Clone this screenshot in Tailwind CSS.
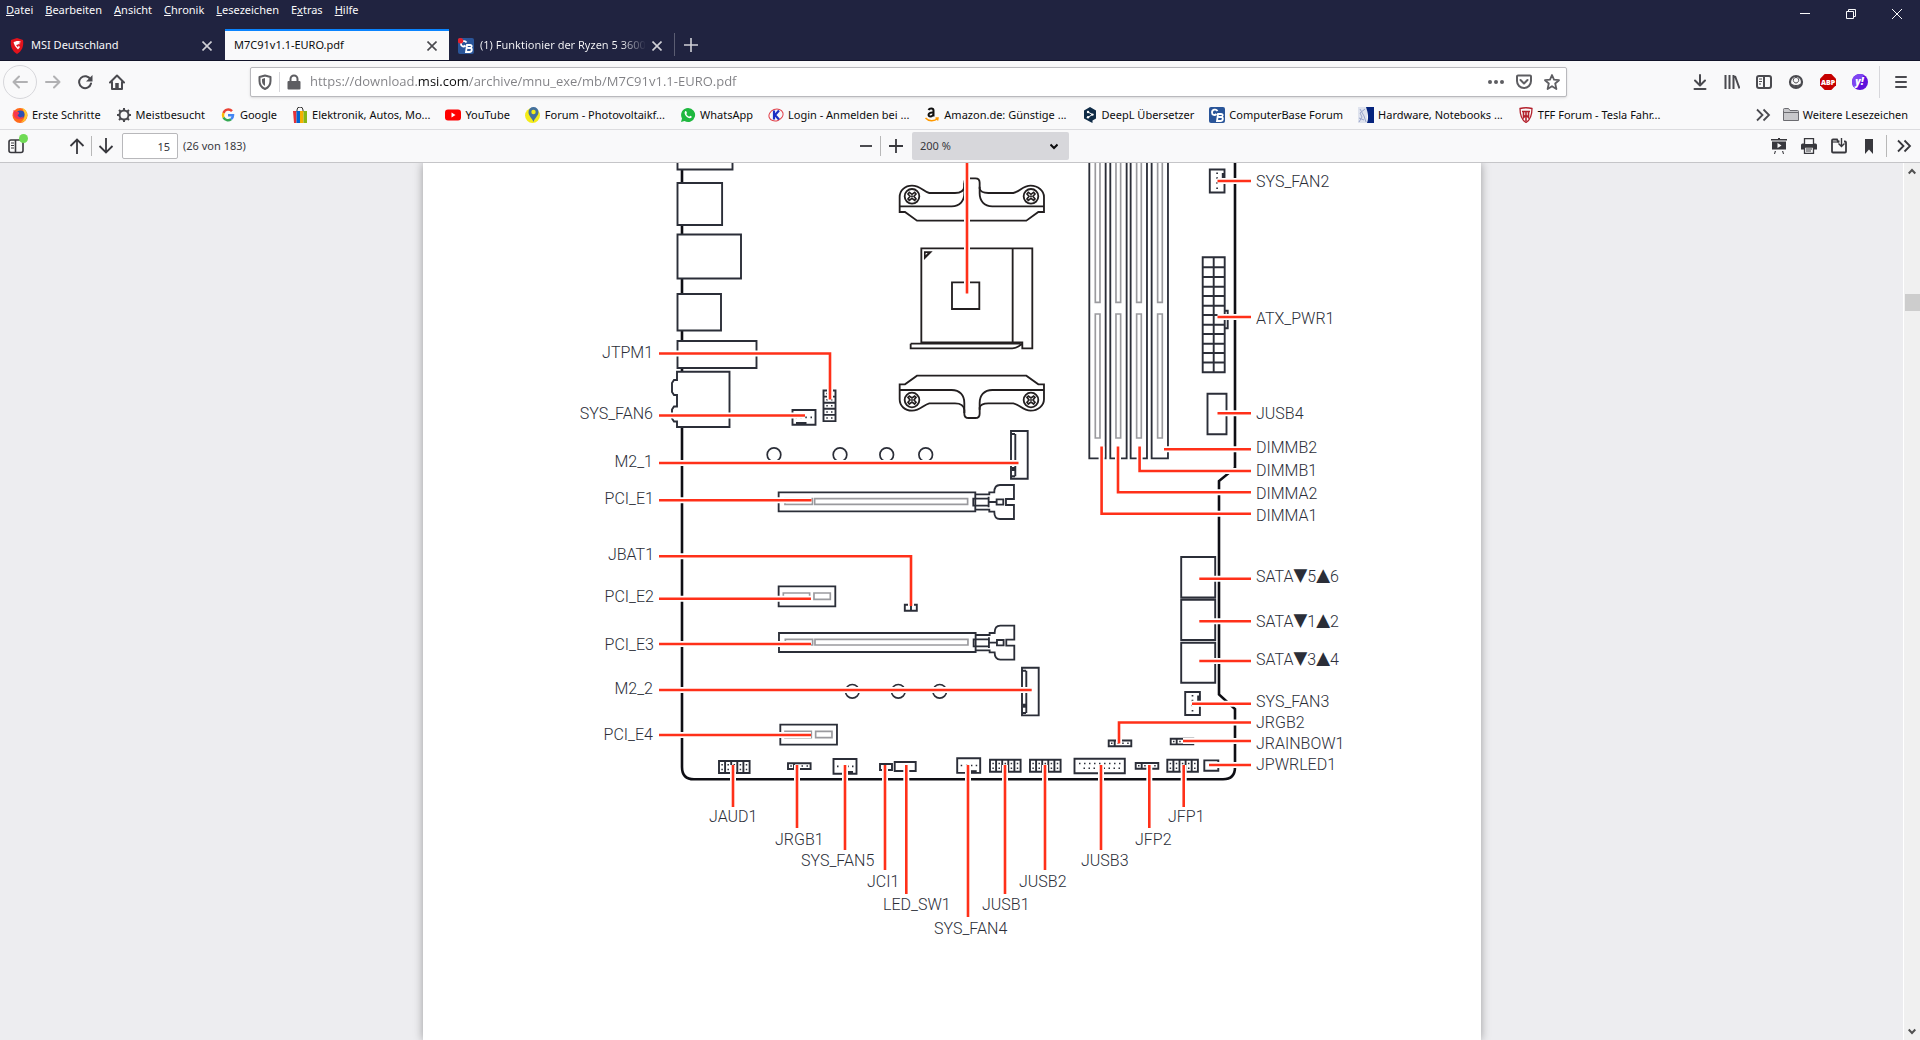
<!DOCTYPE html>
<html lang="de">

<head>
    <meta charset="UTF-8">
    <meta name="viewport" content="width=device-width, initial-scale=1.0">
    <script src="https://cdn.jsdelivr.net/npm/@tailwindcss/browser@4"></script>
    <title>M7C91v1.1-EURO.pdf</title>
</head>

<body class="flex h-screen flex-col overflow-hidden bg-[#f9f9fa] font-['Noto_Sans',sans-serif] text-[11px] text-[#0c0c0d]">

    <!-- Titelleiste -->
    <header class="border-b border-[#12142a] bg-[#202340] text-[#f9f9fa]">
        <div class="flex h-[29px] items-start justify-between">
            <nav class="flex gap-3 px-1.5 pt-0.5" aria-label="Menü">
                <button><u>D</u>atei</button>
                <button><u>B</u>earbeiten</button>
                <button><u>A</u>nsicht</button>
                <button><u>C</u>hronik</button>
                <button><u>L</u>esezeichen</button>
                <button>E<u>x</u>tras</button>
                <button><u>H</u>ilfe</button>
            </nav>
            <div class="flex">
                <button class="flex h-7 w-[46px] items-center justify-center" aria-label="Minimieren">
                    <svg class="size-[10px]" viewBox="0 0 10 10" stroke="currentColor"><path d="M0 4.5h10" /></svg>
                </button>
                <button class="flex h-7 w-[46px] items-center justify-center" aria-label="Verkleinern">
                    <svg class="size-[10px]" viewBox="0 0 10 10" fill="none" stroke="currentColor"><path d="M.5 2.5h7v7h-7zM2.5 2.5v-2h7v7h-2" /></svg>
                </button>
                <button class="flex h-7 w-[46px] items-center justify-center" aria-label="Schließen">
                    <svg class="size-[10px]" viewBox="0 0 10 10" stroke="currentColor"><path d="M0 0l10 10M10 0L0 10" /></svg>
                </button>
            </div>
        </div>
        <div class="flex h-[31px]">
            <div class="flex w-[225px] items-center gap-1.5 border-t-2 border-transparent pr-[13px] pl-[9px]">
                <svg class="h-4 w-4 shrink-0" viewBox="0 0 16 16"><path d="M8 0l6 2c1 6-1 11-6 14C3 13 1 8 2 2z" fill="#e2131c" /><path d="M4.500 4.500c2-2 6-2 7.500-.5L9.500 5l2 1-3 .5 2.500 2.500-2 2.500-3-3.500z" fill="#fff" /><path d="M7 7l3-.5-1 3z" fill="#e2131c" /></svg>
                <span class="flex-1 truncate">MSI Deutschland</span>
                <button aria-label="Tab schließen"><svg class="size-[10px]" viewBox="0 0 10 10" stroke="#d0d0d6" stroke-width="1.6"><path d="M.5.5l9 9M9.5.5l-9 9" /></svg></button>
            </div>
            <div class="flex w-[224px] items-center gap-1.5 border-t-2 border-[#0a84ff] bg-[#f9f9fa] pr-3 pl-[9px] text-[#0c0c0d]">
                <span class="flex-1 truncate">M7C91v1.1-EURO.pdf</span>
                <button aria-label="Tab schließen"><svg class="size-[10px]" viewBox="0 0 10 10" stroke="#4a4a4f" stroke-width="1.6"><path d="M.5.5l9 9M9.5.5l-9 9" /></svg></button>
            </div>
            <div class="flex w-[225px] items-center gap-1.5 border-t-2 border-transparent pr-3 pl-[9px]">
                <svg class="h-4 w-4 shrink-0" viewBox="0 0 16 16"><rect width="16" height="16" rx="2" fill="#2a5599" /><path d="M8.500 4.500C7 2 3 3 3 6s3 3 4.500 1.500M9 7h3c2.500 0 2 3 0 3H9.500 12c3 0 2 4-.5 4H8z" fill="none" stroke="#fff" stroke-width="1.800" /><circle cx="2.500" cy="2.800" r="2.800" fill="#e8202a" /></svg>
                <span class="flex-1 overflow-hidden bg-linear-to-r from-[#f9f9fa] from-85% to-transparent bg-clip-text whitespace-nowrap text-transparent">(1) Funktionier der Ryzen 5 3600</span>
                <button aria-label="Tab schließen"><svg class="size-[10px]" viewBox="0 0 10 10" stroke="#d0d0d6" stroke-width="1.6"><path d="M.5.5l9 9M9.5.5l-9 9" /></svg></button>
            </div>
            <div class="my-1 w-px bg-[#5b5d72]"></div>
            <button class="flex w-8 items-center justify-center" aria-label="Neuer Tab">
                <svg class="size-[14px]" viewBox="0 0 14 14" stroke="#d0d0d6" stroke-width="1.6"><path d="M7 0v14M0 7h14" /></svg>
            </button>
        </div>
    </header>

    <!-- Navigation -->
    <div class="flex h-[41px] shrink-0 items-center px-[3px] text-[#4a4a4f]">
        <button class="flex size-[34px] items-center justify-center rounded-full border border-[#d7d7db] text-[#b1b1b3]" aria-label="Zurück">
            <svg class="size-4" viewBox="0 0 16 16" fill="none" stroke="currentColor" stroke-width="2" stroke-linecap="round" stroke-linejoin="round"><path d="M15 8H1.500M7 2.500L1.500 8 7 13.500" /></svg>
        </button>
        <button class="flex size-8 items-center justify-center text-[#b1b1b3]" aria-label="Vor">
            <svg class="size-4" viewBox="0 0 16 16" fill="none" stroke="currentColor" stroke-width="2" stroke-linecap="round" stroke-linejoin="round"><path d="M1 8h13.500M9 2.500L14.500 8 9 13.500" /></svg>
        </button>
        <button class="flex size-8 items-center justify-center" aria-label="Neu laden">
            <svg class="size-4" viewBox="0 0 16 16" fill="none" stroke="currentColor" stroke-width="2"><path d="M13.500 5.500A6 6 0 1 0 14 9.500" stroke-linecap="round" /><path d="M15.500 1v6.500H9z" fill="currentColor" stroke="none" /></svg>
        </button>
        <button class="flex size-8 items-center justify-center" aria-label="Startseite">
            <svg class="size-4" viewBox="0 0 16 16" fill="none" stroke="currentColor" stroke-width="2" stroke-linecap="round" stroke-linejoin="round"><path d="M1 8.500L8 1.500l7 7M3 8v7h10V8" /><path d="M8 9v5.500" stroke-width="3.500" stroke-linecap="butt" /></svg>
        </button>
        <div class="w-[117px]"></div>
        <div class="flex h-[30px] flex-1 items-center rounded-xs border border-[#b9b9bd] bg-white shadow-sm">
            <svg class="ml-[6px] size-4 shrink-0" viewBox="0 0 16 16" fill="none" stroke="#5e5e62" stroke-width="2"><path d="M8 1.500L2.500 3v4c0 4 2 6.500 5.500 8 3.500-1.500 5.500-4 5.500-8V3z" stroke-linejoin="round" /><path d="M8 4v8c-2-1-3-3-3-5V5z" fill="#5e5e62" stroke="none" /></svg>
            <div class="mx-[6px] h-5 w-px bg-[#d7d7db]"></div>
            <svg class="size-4 shrink-0" viewBox="0 0 16 16"><path d="M2.500 7h11a1 1 0 0 1 1 1v6.500a1 1 0 0 1-1 1h-11a1 1 0 0 1-1-1V8a1 1 0 0 1 1-1z" fill="#5e5e62" /><path d="M4.500 8V5a3.500 3.500 0 0 1 7 0v3" fill="none" stroke="#5e5e62" stroke-width="2" /></svg>
            <input class="mx-2 w-full flex-1 bg-[linear-gradient(to_right,#808084_107px,#0c0c0d_107px,#0c0c0d_158px,#808084_158px)] bg-clip-text font-['Open_Sans',sans-serif] text-[13px] text-transparent outline-none" type="text" aria-label="Adresse" value="https://download.msi.com/archive/mnu_exe/mb/M7C91v1.1-EURO.pdf">
            <button class="flex w-7 shrink-0 justify-center" aria-label="Seitenaktionen"><svg class="size-4" viewBox="0 0 16 16" fill="#5e5e62"><circle cx="2" cy="8" r="2" /><circle cx="8" cy="8" r="2" /><circle cx="14" cy="8" r="2" /></svg></button>
            <button class="flex w-7 shrink-0 justify-center" aria-label="Pocket"><svg class="size-4" viewBox="0 0 16 16" fill="none" stroke="#5e5e62" stroke-width="2" stroke-linecap="round" stroke-linejoin="round"><path d="M2 1.500h12a1 1 0 0 1 1 1V7A7 7 0 0 1 1 7V2.500a1 1 0 0 1 1-1z" /><path d="M4.500 6L8 9.500 11.500 6" /></svg></button>
            <button class="flex w-7 shrink-0 justify-center" aria-label="Lesezeichen hinzufügen"><svg class="size-4" viewBox="0 0 16 16" fill="none" stroke="#5e5e62" stroke-width="1.800" stroke-linejoin="round"><path d="M8 1l2 4.700 5 .5-3.800 3.300L12.400 15 8 12.200 3.600 15l1.200-5.500L1 6.200l5-.5z" /></svg></button>
        </div>
        <div class="w-[117px]"></div>
        <button class="flex size-8 items-center justify-center" aria-label="Downloads"><svg class="size-4" viewBox="0 0 16 16" fill="none" stroke="currentColor" stroke-width="2" stroke-linecap="round" stroke-linejoin="round"><path d="M8 1v10M3 6.500L8 11.500 13 6.500M2.500 15h11" /></svg></button>
        <button class="flex size-8 items-center justify-center" aria-label="Bibliothek"><svg class="size-4" viewBox="0 0 16 16" fill="none" stroke="currentColor" stroke-width="2"><path d="M1.500 1v14M5.500 1v14M9.500 1v14M11 2l4.500 12.500" /></svg></button>
        <button class="flex size-8 items-center justify-center" aria-label="Sidebars"><svg class="size-4" viewBox="0 0 16 16" fill="none" stroke="currentColor" stroke-width="2"><rect x="1" y="2" width="14" height="12" rx="2" /><path d="M8 2v12" /><path d="M3 5h3M3 7.500h3M3 10h2" stroke-width="1" /></svg></button>
        <button class="flex size-8 items-center justify-center" aria-label="Konto"><svg class="size-4" viewBox="0 0 16 16" fill="none" stroke="currentColor"><circle cx="8" cy="8" r="6" stroke-width="2.200" /><path d="M5.500 5a2.800 2.800 0 0 1 5 0c.8 2-.8 4-2.500 4S4.700 7 5.500 5z" stroke-width="1" /><path d="M3.500 10c2 2 7 2 9 0-1 3.500-8 3.500-9 0z" fill="currentColor" /></svg></button>
        <button class="flex size-8 items-center justify-center" aria-label="Adblock Plus"><svg class="size-4" viewBox="0 0 16 16"><path d="M4.700 0h6.600L16 4.700v6.600L11.300 16H4.700L0 11.300V4.700z" fill="#c60000" /><text x="8" y="10.700" text-anchor="middle" fill="#fff" class="font-['Open_Sans',sans-serif] text-[7px] font-extrabold">ABP</text></svg></button>
        <button class="flex size-8 items-center justify-center" aria-label="Yahoo"><svg class="size-4" viewBox="0 0 16 16"><circle cx="8" cy="8" r="8" fill="#5f10dc" /><path d="M0 8a8 8 0 0 1 12-7L2.500 14A8 8 0 0 1 0 8z" fill="#7e45f2" /><text x="7.500" y="11" text-anchor="middle" fill="#fff" class="font-['Open_Sans',sans-serif] text-[10px] font-extrabold italic">y!</text></svg></button>
        <div class="mr-[5px] ml-[3px] h-8 w-px bg-[#d7d7db]"></div>
        <button class="flex size-8 items-center justify-center" aria-label="Menü öffnen"><svg class="size-4" viewBox="0 0 16 16" stroke="currentColor" stroke-width="2" stroke-linecap="round"><path d="M3 3h10M3 8h10M3 13h10" /></svg></button>
    </div>

    <!-- Lesezeichenleiste -->
    <div class="flex h-7 shrink-0 items-center justify-between border-b border-[#dcdcdf] px-3 pb-px">
        <div class="flex gap-[15px] whitespace-nowrap">
            <a href="#" class="flex items-center gap-1"><svg class="size-4" viewBox="0 0 16 16"><circle cx="8" cy="8.500" r="7.500" fill="#ff6a1a" /><path d="M10 1c4 1 6 5 5 9-1 3-3 5-6 5 4-2 5-8 1-14z" fill="#ffc72e" /><circle cx="8.500" cy="7.500" r="4" fill="#2b4fb5" /><path d="M1.500 3c1 1 3 2 5 2 1 1 1 2-1 3 1 3 4 3 6 1-1 4-8 5-10-1z" fill="#f7374f" /></svg>Erste Schritte</a>
            <a href="#" class="flex items-center gap-1"><svg class="size-4" viewBox="0 0 16 16" fill="none" stroke="#4a4a4f"><circle cx="8" cy="8" r="4.500" stroke-width="2" /><path d="M8 1v2.500M8 12.500V15M1 8h2.500M12.500 8H15M3 3l1.800 1.800M11.200 11.200L13 13M3 13l1.800-1.800M11.200 4.800L13 3" stroke-width="2" /></svg>Meistbesucht</a>
            <a href="#" class="flex items-center gap-1"><svg class="size-4" viewBox="0 0 16 16" fill="none" stroke-width="2.500"><path d="M12 4.200A5 5 0 0 0 3.500 6" stroke="#ea4335" /><path d="M3.500 6a5 5 0 0 0 0 4.500" stroke="#fbbc05" /><path d="M3.500 10.500A5 5 0 0 0 11 12.200" stroke="#34a853" /><path d="M11 12.200A5 5 0 0 0 13 8.200H8" stroke="#4285f4" /></svg>Google</a>
            <a href="#" class="flex items-center gap-1"><svg class="size-4" viewBox="0 0 16 16"><path d="M5 5V3a3 3 0 0 1 6 0v2" fill="none" stroke="#333" /><path d="M1 4h3.500v12H2z" fill="#e53238" /><path d="M4.500 4H8v12H4.500z" fill="#0064d2" /><path d="M8 4h3.500v12H8z" fill="#f5af02" /><path d="M11.500 4H15v12h-3.500z" fill="#86b817" /></svg>Elektronik, Autos, Mo...</a>
            <a href="#" class="flex items-center gap-1"><svg class="size-4" viewBox="0 0 16 16"><rect x="0" y="2.500" width="16" height="11" rx="3" fill="#f00" /><path d="M6.500 5.500v5l4-2.500z" fill="#fff" /></svg>YouTube</a>
            <a href="#" class="flex items-center gap-1"><svg class="size-4" viewBox="0 0 16 16"><circle cx="7.500" cy="8.500" r="7.500" fill="#f4ec1a" /><path d="M8.500 15C7 11 3.500 9 3.500 5a5 5 0 0 1 10 0c0 4-4 6-5 10z" fill="#44709d" /><circle cx="8.500" cy="5" r="2.200" fill="#f4ec1a" /></svg>Forum - Photovoltaikf...</a>
            <a href="#" class="flex items-center gap-1"><svg class="size-4" viewBox="0 0 16 16"><path d="M8 1a7 7 0 1 1-3.500 13L1 15l1-3.500A7 7 0 0 1 8 1z" fill="#1fb83f" /><path d="M5 4.500c1-1 1.500 0 2 1.500L6.300 7C7 8.500 8 9 9.200 9.700l1-1c1.500.5 2 1 1.300 1.800C9 13 3 7.500 5 4.500z" fill="#fff" /></svg>WhatsApp</a>
            <a href="#" class="flex items-center gap-1"><svg class="size-4" viewBox="0 0 16 16" fill="none"><ellipse cx="8" cy="8" rx="7.200" ry="5.800" stroke="#e2404a" transform="rotate(-20 8 8)" /><path d="M6 3.500v9M11 3.500L7 8l4 4.500" stroke="#1c2fc4" stroke-width="2.200" /></svg>Login - Anmelden bei ...</a>
            <a href="#" class="flex items-center gap-1"><svg class="size-4" viewBox="0 0 16 16" fill="none"><path d="M4.500 3c1-2 5-2 5 .5v6M9.500 5.500c-6-.5-6 4-3 4 1.500 0 3-1.500 3-3" stroke="#111" stroke-width="2" /><path d="M1.500 11c3 3.500 9 3.500 12 .5M11.500 11l2.500 0-.5 2.500" stroke="#f90" stroke-width="1.500" /></svg>Amazon.de: Günstige ...</a>
            <a href="#" class="flex items-center gap-1"><svg class="size-4" viewBox="0 0 16 16"><path d="M8 0l6 3.500v8L10.500 13.500V16L8 14.700 2 11.500v-8z" fill="#0f2b46" /><path d="M6 5l4.500 2.500L6 10.300" fill="none" stroke="#fff" /><circle cx="6" cy="5" r="1.200" fill="#fff" /><circle cx="10.500" cy="7.600" r="1.200" fill="#fff" /><circle cx="6" cy="10.300" r="1.200" fill="#fff" /></svg>DeepL Übersetzer</a>
            <a href="#" class="flex items-center gap-1"><svg class="size-4" viewBox="0 0 16 16"><rect width="16" height="16" rx="2" fill="#2a5599" /><path d="M8.500 4C7 1.500 3 2.500 3 5.500s3 3 4.500 1.500M9 7h3c2.500 0 2 3 0 3H9.500 12c3 0 2 4-.5 4H8z" fill="none" stroke="#fff" stroke-width="1.800" /></svg>ComputerBase Forum</a>
            <a href="#" class="flex items-center gap-1"><svg class="size-4" viewBox="0 0 16 16"><path d="M0 0h9v16H0z" fill="#dfe3ee" /><path d="M1 15l3-5-2-4 5-4M2 2l4 7 2 6M1 11l5 2" fill="none" stroke="#9aa6cc" /><path d="M8 0h8v16H9c2-5 1-10-1-16z" fill="#06247d" /></svg>Hardware, Notebooks ...</a>
            <a href="#" class="flex items-center gap-1"><svg class="size-4" viewBox="0 0 16 16" fill="none" stroke="#b3202c"><path d="M2 1.500q6-1.500 12 0C14 8 13 12.500 8 15.500 3 12.500 2 8 2 1.500z" stroke-width="1.300" /><path d="M4 4.500h8M8 4.500v10M5.500 4.500v6l2-2M10.500 4.500v6l-2-2" stroke-width="1.600" /></svg>TFF Forum - Tesla Fahr...</a>
        </div>
        <div class="flex items-center whitespace-nowrap">
            <button class="mr-3" aria-label="Weitere Einträge"><svg class="size-4" viewBox="0 0 16 16" fill="none" stroke="#4a4a4f" stroke-width="1.800"><path d="M2 2.500L7.500 8 2 13.500M8.500 2.500L14 8l-5.500 5.500" /></svg></button>
            <a href="#" class="flex items-center gap-1"><svg class="size-4" viewBox="0 0 16 16"><path d="M.5 3.500v-1q0-1 1-1h4l1.500 2h7.500q1 0 1 1v9h-15z" fill="#c8c8cb" stroke="#6b6b70" /><path d="M.5 5.500h15" stroke="#6b6b70" /></svg>Weitere Lesezeichen</a>
        </div>
    </div>

    <!-- PDF-Werkzeugleiste -->
    <div class="flex h-[33px] shrink-0 items-center border-b border-[#c5c5c8] text-[#38383d]">
        <div class="flex flex-1 items-center">
            <button class="relative ml-2" aria-label="Sidebar umschalten">
                <svg class="size-4" viewBox="0 0 16 16" fill="none" stroke="currentColor" stroke-width="1.600"><rect x="1" y="2" width="14" height="12.500" rx="2" /><path d="M7.500 2v12.500" /><path d="M3 5h3M3 7.500h3M3 10h3" stroke-width="1" /></svg>
                <span class="absolute -top-1 -right-1 size-[9px] rounded-full bg-[#70db55]"></span>
            </button>
            <button class="ml-[45px]" aria-label="Vorherige Seite"><svg class="size-4" viewBox="0 0 16 16" fill="none" stroke="currentColor" stroke-width="1.800"><path d="M8 16V1.500M1.500 8L8 1.500 14.500 8" /></svg></button>
            <div class="mx-[6px] h-5 w-px bg-[#b8b8b8]"></div>
            <button aria-label="Nächste Seite"><svg class="size-4" viewBox="0 0 16 16" fill="none" stroke="currentColor" stroke-width="1.800"><path d="M8 0v14.500M1.500 8L8 14.500 14.500 8" /></svg></button>
            <input id="seite" class="ml-2 h-[26px] w-14 rounded-xs border border-[#b8b8bb] bg-white px-[7px] text-right" type="text" value="15">
            <label for="seite" class="ml-[5px]">(26 von 183)</label>
        </div>
        <div class="flex items-center">
            <button class="flex w-[29px] justify-center" aria-label="Verkleinern"><svg class="size-4" viewBox="0 0 16 16" stroke="currentColor" stroke-width="1.800"><path d="M2 8h12" /></svg></button>
            <div class="h-5 w-px bg-[#b8b8b8]"></div>
            <button class="flex w-[29px] justify-center" aria-label="Vergrößern"><svg class="size-4" viewBox="0 0 16 16" stroke="currentColor" stroke-width="1.800"><path d="M1 8h14M8 1v14" /></svg></button>
            <div class="relative ml-0.5 h-7 w-[157px]">
                <select class="size-full appearance-none rounded-xs bg-[#d7d7db] px-2" aria-label="Zoom">
                    <option>200 %</option>
                    <option>150 %</option>
                    <option>100 %</option>
                </select>
                <svg class="pointer-events-none absolute top-2.5 right-[11px] size-2" viewBox="0 0 8 8" fill="none" stroke="#0c0c0d" stroke-width="2"><path d="M.5 2.500L4 6l3.500-3.500" /></svg>
            </div>
        </div>
        <div class="flex flex-1 items-center justify-end">
            <button class="flex w-[30px] justify-center" aria-label="Präsentationsmodus"><svg class="size-4" viewBox="0 0 16 16"><path d="M7 0h2v1h7v1.500H0V1h7zM1 3.500h14v8H1zM5 13l-1 3H3l.8-3zM11 13l1 3h1l-.8-3z" fill="currentColor" /><path d="M6.500 5v5l4-2.500z" fill="#f9f9fa" /></svg></button>
            <button class="flex w-[30px] justify-center" aria-label="Drucken"><svg class="size-4" viewBox="0 0 16 16"><path d="M0 7q0-1.500 1.500-1.500h13Q16 5.500 16 7v4.500H0z" fill="currentColor" /><path d="M3.500 6V.700h9V6M3.500 9h9v6.300h-9z" fill="#f9f9fa" stroke="currentColor" stroke-width="1.300" /><path d="M5 11h6M5 13h5" stroke="currentColor" /></svg></button>
            <button class="flex w-[30px] justify-center" aria-label="Speichern"><svg class="size-4" viewBox="0 0 16 16" fill="none" stroke="currentColor" stroke-width="1.800"><path d="M8.500 3.500H7L6 1.500H2q-1 0-1 1v11q0 1 1 1h12q1 0 1-1v-9q0-1-1-1h-1" /><path d="M1 4h7" stroke-width="1.200" /><path d="M10.500 0v8M7.500 5.500l3 3 3-3" stroke-width="1.400" /></svg></button>
            <button class="flex w-[30px] justify-center" aria-label="Aktuelle Ansicht"><svg class="size-4" viewBox="0 0 16 16"><path d="M4 1h8v15L8 11.500 4 16z" fill="currentColor" /></svg></button>
            <div class="mx-[2px] h-[22px] w-px bg-[#b8b8b8]"></div>
            <button class="mr-2 ml-[7px]" aria-label="Werkzeuge"><svg class="size-4" viewBox="0 0 16 16" fill="none" stroke="currentColor" stroke-width="1.800"><path d="M2 2.500L7.500 8 2 13.500M8.500 2.500L14 8l-5.500 5.500" /></svg></button>
        </div>
    </div>

    <!-- Dokument -->
    <main class="flex min-h-0 flex-1 overflow-hidden bg-[#ededf0]">
        <div class="flex-1 overflow-hidden">
            <div class="mx-auto h-full w-[1058px] overflow-hidden bg-white shadow-[0_0_9px_rgba(0,0,0,0.35)]">
                <svg class="w-full font-['Roboto',sans-serif] text-[16px]" viewBox="423 163 1058 877" role="img" aria-label="Mainboard-Übersicht">
                    <defs>
                        <!-- 2x5-Stiftleiste -->
                        <g id="header10" fill="none" stroke="#2b2e38">
                            <path d="M0 0h30.600v12H0zM6.100 0v12M12.200 0v12M18.300 0v12M24.400 0v12" stroke-width="1.900" />
                            <path d="M3.100 3v1.500M3.100 7.700v1.500M9.200 3v1.500M9.200 7.700v1.500M15.300 3v1.500M15.300 7.700v1.500M21.400 3v1.500M21.400 7.700v1.500M27.500 3v1.500M27.500 7.700v1.500" stroke-width="1.500" />
                        </g>
                        <!-- 4-Pin-Leiste -->
                        <g id="header4" fill="none" stroke="#2b2e38">
                            <path d="M0 0h22.600v5.700H0zM6 0v5.700" stroke-width="1.900" />
                            <path d="M2.300 2.800h1.500M8.500 2.800H10M13.500 2.800H15M18.500 2.800H20" stroke-width="1.500" />
                        </g>
                        <!-- Lüfteranschluss -->
                        <g id="fan" fill="none" stroke="#2b2e38">
                            <path d="M0 0h23v14.700H0z" stroke-width="1.900" />
                            <path d="M3.500 7.300H5M8.700 7.300h1.500M13.700 7.300h1.500M18.500 7.300H20" stroke-width="1.700" />
                            <path d="M9 13.500h10.500" stroke-width="3" />
                        </g>
                        <g id="pcie16" fill="none" stroke="#2b2e38" stroke-width="5.500">
                            <path d="M656 37h590v57H656z" />
                            <path d="M675 56h82v17h-82zM764 56h459v17H764z" stroke="#9a9a9e" stroke-width="5" />
                            <path d="M1246 43h42v-6h15q0-22 17-22h42v42h-24v18h24v42h-42q-17 0-17-22h-15v-6h-42" />
                            <path d="M1240 56h46v21h-46zM1286 66h24M1310 58h20v16h-20zM1286 50v32" />
                        </g>
                        <g id="pcie1" fill="none" stroke="#2b2e38" stroke-width="5.500">
                            <path d="M656 319h170v60H656z" />
                            <path d="M670 339h79v19h-79zM762 339h49v19h-49z" stroke="#9a9a9e" stroke-width="5" />
                        </g>
                        <g id="m2" fill="none" stroke="#2b2e38" stroke-width="1.900">
                            <path d="M1011 431h16.700v47.700H1011zM1015.300 434v42.300M1011 434h4M1011 476.300h4" />
                            <path d="M1013.500 467v4" stroke-width="3" />
                        </g>
                        <g id="bracket" fill="none" stroke="#231f20" stroke-width="5.500">
                            <path d="M119 156v-45c0-20 16-34 37-34 26 0 34 18 52 22h77c16 0 27-6 28-20V68c0-9 4-13 13-13h20c9 0 13 4 13 13v18c2 10 12 13 26 13h75c20-4 28-22 52-22 22 0 40 15 40 34v45h-17l-36 26H171l-36-26z" />
                            <path d="M119 139h156c25 0 38-17 38-39V70M552 139H397c-25 0-38-17-38-39V80" />
                            <g id="screw">
                                <circle cx="156" cy="109" r="22" />
                                <path d="M148 97l8 6 8-6 4 5-6 7 6 8-4 4-8-6-8 6-4-4 6-8-6-7z" stroke-width="5" />
                                <circle cx="156" cy="109" r="3" fill="#231f20" stroke="none" />
                            </g>
                            <use href="#screw" x="357" />
                        </g>
                        <!-- Leitungen der Beschriftungen -->
                        <g id="leads">
                            <path d="M967 150V293.500M659 353.500H830V399.500M659 415.500H805M659 463H1018.500M659 500.300H811.500M659 556.300H911V606M659 598.700H811M659 644H811M659 690H1031.700M659 735H811" />
                            <path d="M733 765V807M797 765V828M845 765V850M885 765V870M906.300 765V894M968 765V917M1005 765V894M1045 765V870M1101 765V850M1149.300 765V828M1183.700 765V807" />
                            <path d="M1251 181H1217.500M1251 317H1217.500M1251 413.300H1217.500M1251 449.300H1164M1251 471H1139.600V446.500M1251 492.300H1118V446.500M1251 513.700H1101.600V446.500" />
                            <path d="M1251 578.700H1199.300M1251 621.300H1199.300M1251 661H1199.300M1251 703.700H1192M1251 722.500H1119V743.500M1251 741H1183M1251 765H1209" />
                        </g>
                    </defs>

                    <!-- Platinenrand -->
                    <path d="M682 150V767q0 12.300 12 12.300H1223q12 0 12-12V709l-16-14.500V481l16-13V150" fill="none" stroke="#0e0e14" stroke-width="2.600" />

                    <!-- Rückseitige Anschlüsse -->
                    <g fill="#fff" stroke="#2b2e38" stroke-width="1.900">
                        <path d="M677.500 150h55v19.500h-55zM677.500 183h44.600v42h-44.600zM677.500 234.500h63.500v44h-63.500zM677.500 294h43.500v36.500h-43.500zM677.500 341h79v27h-79z" />
                        <path d="M677 371.700h52.500V427H677v-5.500h-3l-2-3v-9l2-3h3V395h-3l-2-3v-9l2-3h3z" />
                    </g>

                    <!-- Lochmarken -->
                    <g fill="none" stroke="#2b2e38" stroke-width="1.700">
                        <circle cx="774" cy="454.700" r="6.800" /><circle cx="840" cy="454.700" r="6.800" /><circle cx="886.700" cy="454.700" r="6.800" /><circle cx="925.700" cy="454.700" r="6.800" />
                        <circle cx="852.300" cy="691.300" r="6.800" /><circle cx="898.300" cy="691.300" r="6.800" /><circle cx="939.700" cy="691.300" r="6.800" />
                    </g>

                    <!-- CPU-Sockel und Arbeitsspeicher -->
                    <g transform="translate(860 160) scale(0.3333)" fill="none" stroke-width="5.500">
                        <use href="#bracket" />
                        <use href="#bracket" transform="translate(0 829) scale(1 -1)" />
                        <path d="M184 547V265h333v300h-30v-18zM458 265v282M276 367h82v80h-82zM152 551h330M152 551v14h305q14 0 30-14" stroke="#231f20" />
                        <path d="M192 274h26l-26 26zM197 279v7l6-7z" fill="#231f20" fill-rule="evenodd" />
                        <path d="M688 -30h49v925h-49zM751 -30h49v925h-49zM812 -30h49v925h-49zM875 -30h49v925h-49z" stroke="#2b2e38" />
                        <path d="M706 -30h14v457h-14zM768 -30h14v457h-14zM830 -30h14v457h-14zM893 -30h14v457h-14zM706 462h14v372h-14zM768 462h14v372h-14zM830 462h14v372h-14zM893 462h14v372h-14z" stroke="#9a9a9e" stroke-width="5" />
                    </g>

                    <!-- Steckplätze -->
                    <use href="#m2" />
                    <use href="#m2" x="11" y="236.700" />
                    <g transform="translate(560 480) scale(0.3333)">
                        <use href="#pcie16" />
                        <use href="#pcie16" x="1" y="422" />
                        <use href="#pcie1" />
                        <use href="#pcie1" x="5" y="415" />
                    </g>

                    <!-- Stromanschluss, USB, SATA -->
                    <g fill="none" stroke="#2b2e38" stroke-width="1.900">
                        <path d="M1202.700 257.300h22V372.300h-22zM1213.700 257.300v115M1202.700 267.300h22M1202.700 277h22M1202.700 286.700h22M1202.700 296h22M1202.700 305.700h22M1202.700 315h22M1202.700 324.700h22M1202.700 334h22M1202.700 343.700h22M1202.700 353h22M1202.700 362.500h22M1225 310.700h2.700v17.600h-2.700" />
                        <path d="M1207.500 393.700h19v40.600h-19zM1181.200 557h34v40.500h-34zM1181.200 599.800h34v40.200h-34zM1181.200 642.700h34v40h-34z" />
                        <path d="M1074.500 758.700h50.300v14.500h-50.300zM1204.300 760.400h14v10.300h-14zM894.700 762h21v9h-21zM880 764h12v6h-12zM885.500 764v6M904.800 604.700h12v6h-12zM911 604.700v6" />
                        <path d="M1079 763.500h43M1083.500 768.300h37" stroke-dasharray="1.500 3.500" stroke-width="1.500" />
                    </g>

                    <!-- Stiftleisten -->
                    <use href="#header10" x="719" y="761" />
                    <use href="#header10" x="990" y="759.800" />
                    <use href="#header10" x="1030" y="759.800" />
                    <use href="#header10" x="1167.300" y="759.800" />
                    <use href="#header10" transform="translate(835.500 390.500) rotate(90)" />
                    <use href="#header4" x="788" y="763.300" />
                    <use href="#header4" x="1135.700" y="763" />
                    <use href="#header4" x="1108.700" y="740.500" />
                    <use href="#header4" x="1170.700" y="738.700" />
                    <use href="#fan" x="833.500" y="759" />
                    <use href="#fan" x="957.200" y="758.200" />
                    <use href="#fan" transform="translate(815.500 410) scale(-1 1)" />
                    <use href="#fan" transform="translate(1209.800 192.500) rotate(-90)" />
                    <use href="#fan" transform="translate(1185.200 715) rotate(-90)" />

                    <use href="#leads" fill="none" stroke="#fff" stroke-width="6" />
                    <use href="#leads" fill="none" stroke="#ff3019" stroke-width="2.600" />

                    <!-- Beschriftungen -->
                    <g fill="#2b2e38" text-anchor="end" class="font-light">
                        <text x="653" y="358">JTPM1</text>
                        <text x="653" y="419">SYS_FAN6</text>
                        <text x="653" y="467">M2_1</text>
                        <text x="654" y="504">PCI_E1</text>
                        <text x="654" y="560">JBAT1</text>
                        <text x="654" y="602">PCI_E2</text>
                        <text x="654" y="650">PCI_E3</text>
                        <text x="653" y="694">M2_2</text>
                        <text x="653" y="740">PCI_E4</text>
                    </g>
                    <g fill="#2b2e38" class="font-light">
                        <text x="1256" y="187">SYS_FAN2</text>
                        <text x="1256" y="324">ATX_PWR1</text>
                        <text x="1256" y="419">JUSB4</text>
                        <text x="1256" y="453">DIMMB2</text>
                        <text x="1256" y="476">DIMMB1</text>
                        <text x="1256" y="499">DIMMA2</text>
                        <text x="1256" y="521">DIMMA1</text>
                        <text x="1256" y="582">SATA<tspan class="font-['DejaVu_Sans_Mono',monospace] text-[23px]">▼</tspan>5<tspan class="font-['DejaVu_Sans_Mono',monospace] text-[23px]">▲</tspan>6</text>
                        <text x="1256" y="627">SATA<tspan class="font-['DejaVu_Sans_Mono',monospace] text-[23px]">▼</tspan>1<tspan class="font-['DejaVu_Sans_Mono',monospace] text-[23px]">▲</tspan>2</text>
                        <text x="1256" y="665">SATA<tspan class="font-['DejaVu_Sans_Mono',monospace] text-[23px]">▼</tspan>3<tspan class="font-['DejaVu_Sans_Mono',monospace] text-[23px]">▲</tspan>4</text>
                        <text x="1256" y="707">SYS_FAN3</text>
                        <text x="1256" y="728">JRGB2</text>
                        <text x="1256" y="749">JRAINBOW1</text>
                        <text x="1256" y="770">JPWRLED1</text>
                        <text x="709" y="822">JAUD1</text>
                        <text x="775" y="845">JRGB1</text>
                        <text x="801" y="866">SYS_FAN5</text>
                        <text x="867" y="887">JCI1</text>
                        <text x="883" y="910">LED_SW1</text>
                        <text x="934" y="934">SYS_FAN4</text>
                        <text x="982" y="910">JUSB1</text>
                        <text x="1019" y="887">JUSB2</text>
                        <text x="1081" y="866">JUSB3</text>
                        <text x="1135" y="845">JFP2</text>
                        <text x="1168" y="822">JFP1</text>
                    </g>
                </svg>
            </div>
        </div>
        <!-- Bildlaufleiste -->
        <div class="flex w-[17px] flex-col items-center border-l border-white bg-[#f0f0f0]">
            <svg class="h-[17px] w-2" viewBox="0 0 8 17" fill="none" stroke="#505050" stroke-width="2"><path d="M.700 10.500L4 7l3.300 3.500" /></svg>
            <div class="mt-[114px] h-[17px] w-[15px] bg-[#cdcdcd]"></div>
            <svg class="mt-auto h-[17px] w-2" viewBox="0 0 8 17" fill="none" stroke="#505050" stroke-width="2"><path d="M.700 6.500L4 10l3.300-3.500" /></svg>
        </div>
    </main>
</body>

</html>
